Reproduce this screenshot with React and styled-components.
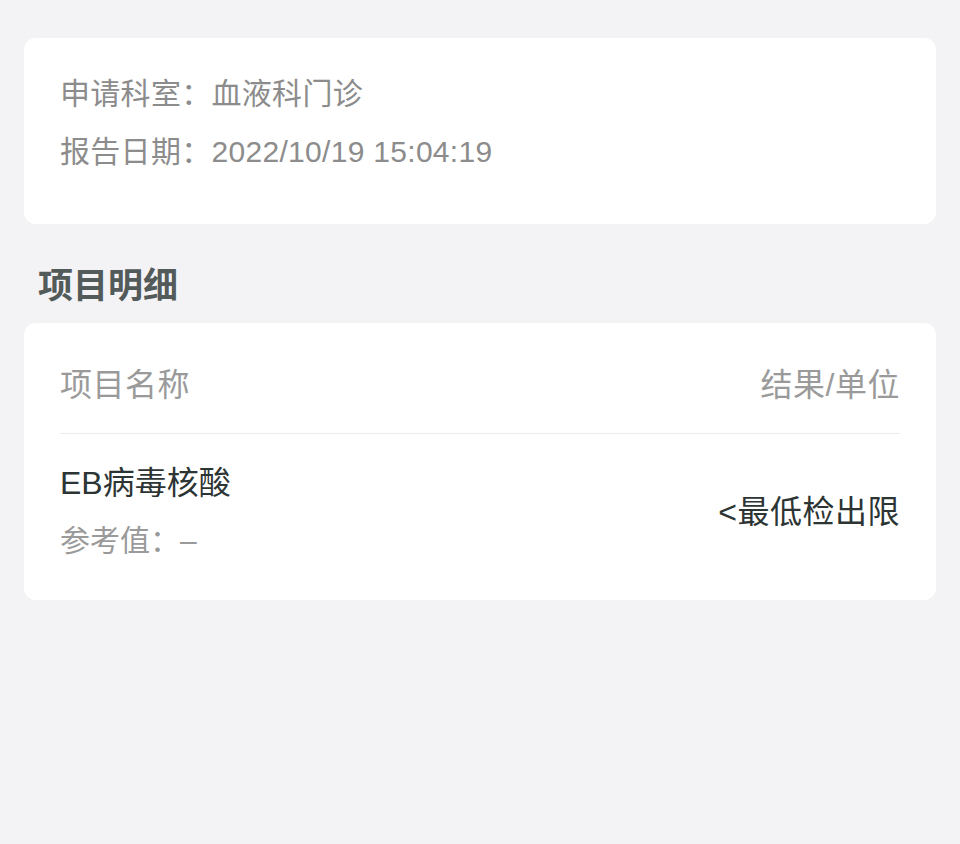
import React from 'react';
import styled, { createGlobalStyle } from 'styled-components';

const GlobalStyle = createGlobalStyle`
  html, body {
    margin: 0;
    padding: 0;
    background: #f3f3f6;
  }
  body {
    font-family: "Liberation Sans", "Noto Sans CJK SC", sans-serif;
  }
`;

const info = [
  { label: '申请科室：', value: '血液科门诊' },
  { label: '报告日期：', value: '2022/10/19 15:04:19' },
];

const items = [
  { name: 'EB病毒核酸', ref: '–', result: '<最低检出限' },
];

function App() {
  return (
    <Page>
      <GlobalStyle />
      <Card>
        <InfoBlock>
          {info.map((row) => (
            <InfoRow key={row.label}>
              <span>{row.label}</span>
              <span>{row.value}</span>
            </InfoRow>
          ))}
        </InfoBlock>
      </Card>
      <SectionTitle>项目明细</SectionTitle>
      <Card>
        <TableHead>
          <span>项目名称</span>
          <span>结果/单位</span>
        </TableHead>
        {items.map((item) => (
          <ItemRow key={item.name}>
            <ItemLeft>
              <ItemName>{item.name}</ItemName>
              <ItemRef>参考值：{item.ref}</ItemRef>
            </ItemLeft>
            <ItemResult>{item.result}</ItemResult>
          </ItemRow>
        ))}
      </Card>
    </Page>
  );
}

const Page = styled.div`
  min-height: 844px;
  padding: 38px 24px;
  box-sizing: border-box;
  background: #f3f3f6;
`;

const Card = styled.div`
  background: #ffffff;
  border-radius: 12px;
  padding: 0 36px;
`;

const InfoBlock = styled.div`
  padding: 27px 0 43px;
`;

const InfoRow = styled.div`
  display: flex;
  font-size: 30px;
  line-height: 58px;
  height: 58px;
  color: #8c8c8c;
  letter-spacing: 0.3px;
  & > span:first-child {
    flex: none;
  }
`;

const SectionTitle = styled.div`
  font-size: 35px;
  font-weight: 700;
  color: #535a5a;
  line-height: 44px;
  padding: 40px 14px 15px;
`;

const TableHead = styled.div`
  display: flex;
  justify-content: space-between;
  align-items: center;
  box-sizing: border-box;
  height: 111px;
  padding-top: 7px;
  border-bottom: 1px solid #ececec;
  font-size: 32px;
  color: #9a9a9a;
  letter-spacing: 0.5px;
`;

const ItemRow = styled.div`
  display: flex;
  justify-content: space-between;
  align-items: center;
  padding: 27px 0 37px;
`;

const ItemLeft = styled.div`
  display: flex;
  flex-direction: column;
  gap: 14px;
`;

const ItemName = styled.div`
  font-size: 32px;
  line-height: 44px;
  color: #2d3434;
`;

const ItemRef = styled.div`
  font-size: 30px;
  line-height: 44px;
  color: #9a9a9a;
`;

const ItemResult = styled.div`
  font-size: 32px;
  color: #2d3434;
  letter-spacing: 0.5px;
  padding-bottom: 7px;
`;

export default App;
